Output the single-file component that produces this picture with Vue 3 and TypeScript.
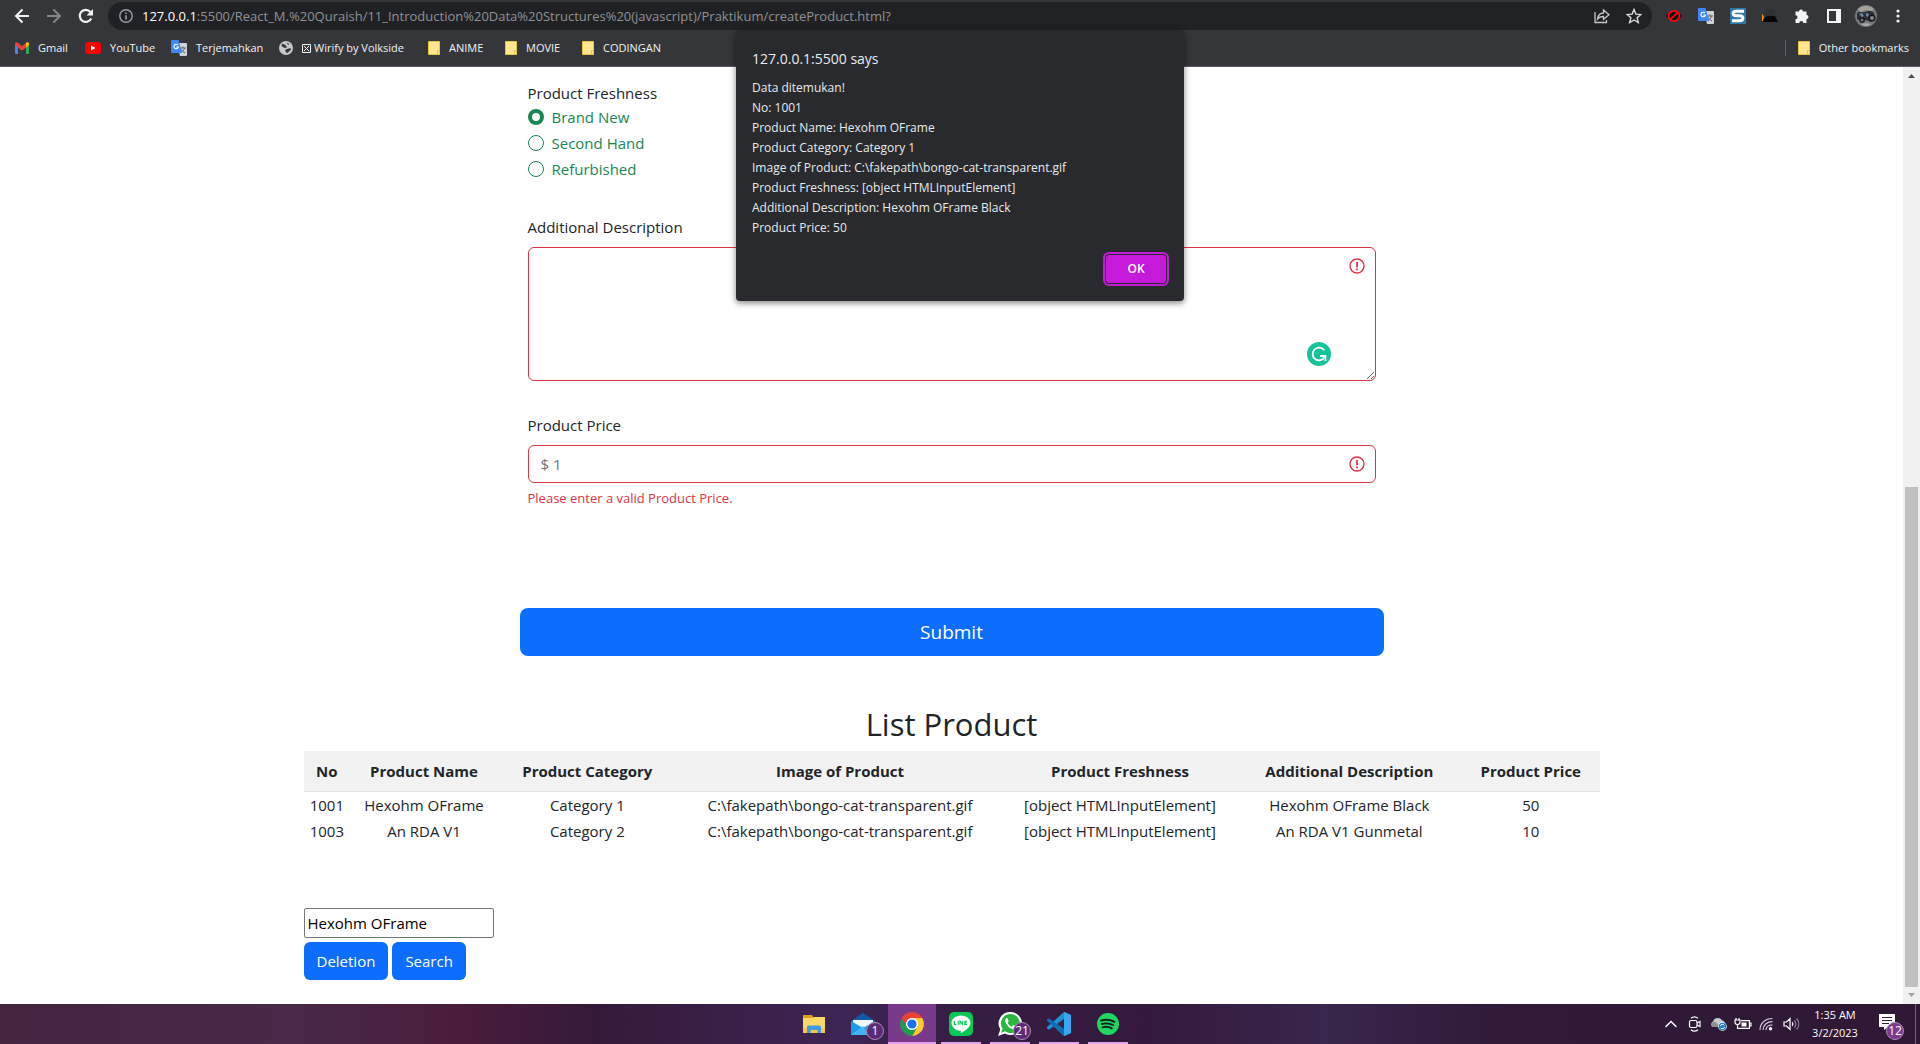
<script setup lang="ts">
import { ref } from 'vue'

interface Product {
  no: number
  name: string
  category: string
  image: string
  freshness: string
  description: string
  price: number
}

const headings: string[] = [
  'No',
  'Product Name',
  'Product Category',
  'Image of Product',
  'Product Freshness',
  'Additional Description',
  'Product Price',
]

const products: Product[] = [
  {
    no: 1001,
    name: 'Hexohm OFrame',
    category: 'Category 1',
    image: 'C:\\fakepath\\bongo-cat-transparent.gif',
    freshness: '[object HTMLInputElement]',
    description: 'Hexohm OFrame Black',
    price: 50,
  },
  {
    no: 1003,
    name: 'An RDA V1',
    category: 'Category 2',
    image: 'C:\\fakepath\\bongo-cat-transparent.gif',
    freshness: '[object HTMLInputElement]',
    description: 'An RDA V1 Gunmetal',
    price: 10,
  },
]

const alertLines: string[] = [
  'Data ditemukan!',
  'No: 1001',
  'Product Name: Hexohm OFrame',
  'Product Category: Category 1',
  'Image of Product: C:\\fakepath\\bongo-cat-transparent.gif',
  'Product Freshness: [object HTMLInputElement]',
  'Additional Description: Hexohm OFrame Black',
  'Product Price: 50',
]

const conditions: string[] = ['Brand New', 'Second Hand', 'Refurbished']
const freshness = ref<string>('Brand New')
const description = ref<string>('')
const price = ref<string>('')
const query = ref<string>('Hexohm OFrame')
</script>

<template>
  <div class="screen">
    <header class="browser">
      <div class="toolbar">
        <button class="tool" type="button" aria-label="Back">
          <svg width="16" height="16" viewBox="0 0 16 16" fill="none" stroke="#f1f3f4" stroke-width="2"><path d="M15 8H2.5M8.5 1.5 2 8l6.500 6.500" /></svg>
        </button>
        <button class="tool" type="button" aria-label="Forward">
          <svg width="16" height="16" viewBox="0 0 16 16" fill="none" stroke="#85868a" stroke-width="2"><path d="M1 8h12.500M7.500 1.500 14 8l-6.500 6.500" /></svg>
        </button>
        <button class="tool" type="button" aria-label="Reload">
          <svg width="16" height="16" viewBox="0 0 16 16" fill="none"><path d="M13.200 10.500A6 6 0 1 1 12.400 4" stroke="#f1f3f4" stroke-width="2.200" /><path d="M15 1v6.500H8.500z" fill="#f1f3f4" /></svg>
        </button>
        <div class="address">
          <svg class="info" width="14" height="14" viewBox="0 0 14 14" fill="none" stroke="#9aa0a6" stroke-width="1.400"><circle cx="7" cy="7" r="6.200" /><path d="M7 6.200v4.300M7 3.400v1.500" stroke-width="1.600" /></svg>
          <span class="url"><span class="host">127.0.0.1</span>:5500/React_M.%20Quraish/11_Introduction%20Data%20Structures%20(javascript)/Praktikum/createProduct.html?</span>
          <button class="tool" type="button" aria-label="Share">
            <svg width="16" height="16" viewBox="0 0 16 16" fill="none" stroke="#c4c7c9" stroke-width="1.300"><path d="M1 4v10.500h11.500V12M3.500 11c.6-4 2.500-6 6-6V2l5.500 4.700-5.500 4.600V8.500c-3 0-4.600.7-6 2.500z" /></svg>
          </button>
          <button class="tool" type="button" aria-label="Bookmark this tab">
            <svg width="16" height="16" viewBox="0 0 16 16" fill="none" stroke="#d5d7d9" stroke-width="1.400"><path d="m8 1.500 1.900 4.600 5 .4-3.800 3.200 1.200 4.900L8 12l-4.300 2.600 1.200-4.900L1.100 6.500l5-.4z" /></svg>
          </button>
        </div>
        <button class="tool" type="button" aria-label="Blocker extension">
          <svg width="16" height="16" viewBox="0 0 16 16"><path d="M0 8c3-5.500 13-5.500 16 0-3 5.500-13 5.500-16 0z" fill="#1c0808" /><ellipse cx="8" cy="8" rx="5.500" ry="5" fill="none" stroke="#f00a0a" stroke-width="1.800" /><path d="m4.500 11 7-6" stroke="#f00a0a" stroke-width="1.800" /></svg>
        </button>
        <button class="tool" type="button" aria-label="Google Translate">
          <svg width="16" height="16" viewBox="0 0 16 16"><path d="M6 3h9a1 1 0 0 1 1 1v11a1 1 0 0 1-1 1H9z" fill="#cfd2d6" /><path d="M9 8h6M12 6.500V8m1.500 0c-.5 2-2 3.500-3.500 4.500M10.500 9.500c.6 1.500 2 2.700 3.500 3.300" stroke="#5f6368" fill="none" /><path d="M1 0h6.500l3.700 13H1a1 1 0 0 1-1-1V1a1 1 0 0 1 1-1z" fill="#4285f4" /><path d="M7 5a2.300 2.300 0 1 0 .5 2H5.200" stroke="#fff" stroke-width="1.100" fill="none" /></svg>
        </button>
        <button class="tool" type="button" aria-label="Stylus extension">
          <svg width="16" height="16" viewBox="0 0 16 16"><path fill="#2f78a8" d="M0 0h16v16H0z" /><path d="M14 3.300H6.500c-4.500 0-4.500 4.500 0 4.500h3c4.500 0 4.500 4.900 0 4.900H2" fill="none" stroke="#fff" stroke-width="3" /></svg>
        </button>
        <button class="tool" type="button" aria-label="Cat extension">
          <svg width="16" height="16" viewBox="0 0 16 16"><path d="M0 6c2 1 2 3 2 7H0z" fill="#f58a16" /><path d="M1 14c0-3 1-4 3-5l1-1h8l3 6z" fill="#050505" /><path d="M3 1h10v7H3z" fill="#303135" /></svg>
        </button>
        <button class="tool" type="button" aria-label="Extensions">
          <svg width="16" height="16" viewBox="0 0 16 16" fill="#f1f3f4"><path d="M1.500 3.500H5a2 2 0 0 1 4 0h3.500V7a2 2 0 0 1 0 4v4H9.300a2 2 0 0 0-4 0H1.500v-3.800a2 2 0 0 0 0-4z" /></svg>
        </button>
        <button class="tool" type="button" aria-label="Side panel">
          <svg width="14" height="14" viewBox="0 0 14 14"><path fill="#f1f3f4" d="M0 0h14v14H0z" /><path fill="#35363a" d="M2 2h7v10H2z" /></svg>
        </button>
        <button class="tool" type="button" aria-label="Profile">
          <svg width="22" height="22" viewBox="0 0 22 22"><circle cx="11" cy="11" r="11" fill="#77797b" /><path d="M3 4c4-4 12-4 16 0l-3 2-5-1-5 2z" fill="#a5a09a" /><path d="M2 8c3-2 5 0 8-1s6-2 9 1l1 6-4 3-5-2-4 2-5-3z" fill="#2b3038" /><path d="m4 9 3-1 2 3-2 1zM11 8l3 1-1 3-2-1z" fill="#6f86a3" /><circle cx="17" cy="13" r="2.800" fill="#858787" stroke="#15171a" stroke-width="1.500" /><circle cx="7" cy="15" r="2.200" fill="#6c6e70" stroke="#15171a" stroke-width="1.300" /><path d="M6 19c3-1 7-1 10 0-3 2.500-7 2.500-10 0z" fill="#a9aaaa" /></svg>
        </button>
        <button class="tool" type="button" aria-label="Menu">
          <svg width="4" height="14" viewBox="0 0 4 14" fill="#f1f3f4"><circle cx="2" cy="2" r="1.600" /><circle cx="2" cy="7" r="1.600" /><circle cx="2" cy="12" r="1.600" /></svg>
        </button>
      </div>

      <nav class="bookmarks" aria-label="Bookmarks">
        <a class="bookmark" href="#gmail">
          <svg width="14" height="12" viewBox="0 0 14 12"><path fill="#4285f4" d="M0 2v9a1 1 0 0 0 1 1h2V5z" /><path fill="#34a853" d="M14 2v9a1 1 0 0 1-1 1h-2V5z" /><path fill="#ea4335" d="M0 2C0 0 2-.2 3 .8l4 3.400 4-3.400C12-.2 14 0 14 2v1L7 8.700 0 3z" /><path fill="#fbbc04" d="M11 .8C12-.2 14 0 14 2v1l-3 2.500z" /></svg>
          Gmail
        </a>
        <a class="bookmark" href="#youtube">
          <svg width="16" height="12" viewBox="0 0 16 12"><rect width="16" height="12" rx="3" fill="#f00" /><path d="m6 3.500 4.500 2.500L6 8.500z" fill="#fff" /></svg>
          YouTube
        </a>
        <a class="bookmark" href="#translate">
          <svg width="16" height="16" viewBox="0 0 16 16"><path d="M6 3h9a1 1 0 0 1 1 1v11a1 1 0 0 1-1 1H9z" fill="#cfd2d6" /><path d="M9 8h6M12 6.500V8m1.500 0c-.5 2-2 3.500-3.500 4.500M10.500 9.500c.6 1.500 2 2.700 3.500 3.300" stroke="#5f6368" fill="none" /><path d="M1 0h6.500l3.700 13H1a1 1 0 0 1-1-1V1a1 1 0 0 1 1-1z" fill="#4285f4" /><path d="M7 5a2.300 2.300 0 1 0 .5 2H5.200" stroke="#fff" stroke-width="1.100" fill="none" /></svg>
          Terjemahkan
        </a>
        <a class="bookmark" href="#wirify">
          <svg width="14" height="14" viewBox="0 0 14 14"><circle cx="7" cy="7" r="7" fill="#c6c9cc" /><path d="M3 2.500 6.500 4 8 6.500 5.500 7l-3-2zM7.500 1.500l3 1.500-1.500 1zM6.500 8.500l5-1.500.5 1.500-3.500 3.500-2-1z" fill="#35363a" /></svg>
          <span class="wirify">
            <svg width="9" height="9" viewBox="0 0 9 9" fill="none" stroke="#f1f3f4"><path d="M.5.500h8v8h-8zM2 2l5 5M7 2 2 7" /></svg>
            Wirify by Volkside
          </span>
        </a>
        <a v-for="folder in ['ANIME', 'MOVIE', 'CODINGAN']" :key="folder" class="bookmark" :href="'#' + folder.toLowerCase()">
          <svg width="12" height="14" viewBox="0 0 12 14"><path d="M.5.500h11v13H.5z" fill="#ffe58f" stroke="#e8c445" /><path d="M9.500 9.500h2v4h-2z" fill="#ffe58f" stroke="#e8c445" /></svg>
          {{ folder }}
        </a>
        <a class="bookmark other" href="#other">
          <svg width="12" height="14" viewBox="0 0 12 14"><path d="M.5.500h11v13H.5z" fill="#ffe58f" stroke="#e8c445" /><path d="M9.500 9.500h2v4h-2z" fill="#ffe58f" stroke="#e8c445" /></svg>
          Other bookmarks
        </a>
      </nav>
    </header>

    <div class="viewport">
      <main class="page">
        <div class="container">
          <form class="product-form" @submit.prevent>
            <fieldset class="field">
              <legend class="label">Product Freshness</legend>
              <label v-for="condition in conditions" :key="condition" class="choice">
                <input v-model="freshness" type="radio" name="freshness" :value="condition" />
                {{ condition }}
              </label>
            </fieldset>

            <div class="field">
              <label class="label spaced" for="description">Additional Description</label>
              <div class="control">
                <textarea id="description" v-model="description" class="input area"></textarea>
                <svg class="invalid" width="16" height="16" viewBox="0 0 16 16" fill="none" stroke="#dc3545" stroke-width="1.400"><circle cx="8" cy="8" r="7" /><path d="M8 4v5.200M8 10.500v1.800" stroke-width="1.800" /></svg>
                <svg class="grammar" width="24" height="24" viewBox="0 0 24 24"><circle cx="12" cy="12" r="12" fill="#15c39a" /><path d="M17.300 8.300A6.400 6.400 0 1 0 17.700 15" fill="none" stroke="#fff" stroke-width="1.800" /><path d="M13 14h5.400v5" fill="none" stroke="#fff" stroke-width="1.800" /></svg>
              </div>
            </div>

            <div class="field">
              <label class="label spaced" for="price">Product Price</label>
              <div class="control">
                <input id="price" v-model="price" class="input" type="text" placeholder="$ 1" />
                <svg class="invalid" width="16" height="16" viewBox="0 0 16 16" fill="none" stroke="#dc3545" stroke-width="1.400"><circle cx="8" cy="8" r="7" /><path d="M8 4v5.200M8 10.500v1.800" stroke-width="1.800" /></svg>
              </div>
              <p class="feedback">Please enter a valid Product Price.</p>
            </div>

            <button class="button submit" type="submit">Submit</button>
          </form>

          <h2 class="title">List Product</h2>
          <table class="products">
            <colgroup>
              <col class="col-no" />
              <col class="col-name" />
              <col class="col-category" />
              <col class="col-image" />
              <col class="col-freshness" />
              <col class="col-description" />
              <col class="col-price" />
            </colgroup>
            <thead>
              <tr>
                <th v-for="heading in headings" :key="heading" scope="col">{{ heading }}</th>
              </tr>
            </thead>
            <tbody>
              <tr v-for="product in products" :key="product.no">
                <td>{{ product.no }}</td>
                <td>{{ product.name }}</td>
                <td>{{ product.category }}</td>
                <td>{{ product.image }}</td>
                <td>{{ product.freshness }}</td>
                <td>{{ product.description }}</td>
                <td>{{ product.price }}</td>
              </tr>
            </tbody>
          </table>

          <div class="lookup">
            <input v-model="query" class="query" type="text" aria-label="Product name" />
            <div class="actions">
              <button class="button" type="button">Deletion</button>
              <button class="button" type="button">Search</button>
            </div>
          </div>
        </div>
      </main>

      <div class="scrollbar" aria-hidden="true">
        <svg width="17" height="17" viewBox="0 0 17 17"><path d="m5 11 3.500-4 3.500 4z" fill="#505050" /></svg>
        <div class="track"><div class="thumb"></div></div>
        <svg width="17" height="17" viewBox="0 0 17 17"><path d="m5 6 3.500 4L12 6z" fill="#a3a3a3" /></svg>
      </div>
    </div>

    <footer class="taskbar">
      <div class="apps">
        <button class="app" type="button" aria-label="File Explorer">
          <svg width="24" height="24" viewBox="0 0 24 24"><path d="M1 3h8l2 2h12v16H1z" fill="#fbd768" /><path d="M1 3h9l1.500 3H1z" fill="#e0a01c" /><path d="M1 16h22v5H1z" fill="#f6c64e" /><path d="M5 21v-6a1.500 1.500 0 0 1 1.500-1.500h11A1.500 1.500 0 0 1 19 15v6h-3.500v-3h-7v3z" fill="#3f9be0" /></svg>
        </button>
        <button class="app" type="button" aria-label="Mail, 1 unread">
          <svg width="24" height="24" viewBox="0 0 24 24"><path d="M0 9 12 1l12 8v3H0z" fill="#0f5ba8" /><path d="M2 8h20v9H2z" fill="#f3f6fa" /><path d="m0 9 12 7 12-7v14H0z" fill="#1b9cea" /><path d="m0 23 12-9 5 9z" fill="#42b6f5" /></svg>
          <span class="badge">1</span>
        </button>
        <button class="app active" type="button" aria-label="Google Chrome">
          <svg width="26" height="26" viewBox="0 0 48 48"><circle cx="24" cy="24" r="12" fill="#fff" /><path d="M43.050 13H24a11 11 0 0 0-9.530 16.500L4.950 13a22 22 0 0 1 38.100 0z" fill="#ea4335" /><path d="M43.050 13A22 22 0 0 1 24 46l9.530-16.500A11 11 0 0 0 24 13z" fill="#fcc934" /><path d="M24 46A22 22 0 0 1 4.950 13l9.520 16.500a11 11 0 0 0 19.060 0z" fill="#1e9e4a" /><circle cx="24" cy="24" r="8.500" fill="#1a73e8" /></svg>
        </button>
        <button class="app open" type="button" aria-label="LINE">
          <svg width="24" height="24" viewBox="0 0 24 24"><rect width="24" height="24" rx="5" fill="#06c755" /><path d="M12 3.500c5.200 0 9.500 3.300 9.500 7.400 0 4-5 7.300-9 9.900-.8.500-.8-.3-.7-2-5-.2-9.300-3.600-9.300-7.900 0-4.100 4.300-7.400 9.500-7.400z" fill="#fff" /><path d="M5.500 9v3.500h2M9.200 9v3.700M11 12.700V9l2.700 3.500V9M18 9.300h-2.200v3.200H18M16 10.900h1.800" stroke="#06c755" stroke-width="1.100" fill="none" /></svg>
        </button>
        <button class="app open" type="button" aria-label="WhatsApp, 21 unread">
          <svg width="24" height="24" viewBox="0 0 24 24"><path d="M12.500 0A11.500 11.500 0 1 1 6.800 21.500L0 24l2.300-6.500A11.500 11.500 0 0 1 12.500 0z" fill="#fff" /><path d="M12.500 2A9.500 9.500 0 1 1 7 19.300L3 21l1.500-4.300A9.500 9.500 0 0 1 12.500 2z" fill="#2cb742" /><path d="M8.500 6c-1.500 1-1.800 3-.4 5.500 1.600 3 4 5 6.700 5.800 1.700.5 3.500-.7 3.500-2.500l-3-1.700-1.500 1.600c-2-.8-3.300-2-4.200-4l1.100-1.500L9.600 6z" fill="#fff" /></svg>
          <span class="badge">21</span>
        </button>
        <button class="app open" type="button" aria-label="Visual Studio Code">
          <svg width="24" height="24" viewBox="0 0 24 24"><path d="m17 0 7 3v18l-7 3L6.500 14.200 2 17.700 0 16.500V15L12 4.500z" fill="#1f8fd6" /><path d="M0 9V7.500l2-1.200L17.500 18v6L7 14.500z" fill="#0c6fb4" /><path d="M17.500 6.500v11L10 12z" fill="#382146" /><path d="m17 0 7 3v18l-7 3z" fill="#3aa8f0" /></svg>
        </button>
        <button class="app open" type="button" aria-label="Spotify">
          <svg width="22" height="22" viewBox="0 0 22 22"><circle cx="11" cy="11" r="11" fill="#1ed760" /><path d="M4 7.500c4.500-1.300 9.500-.9 13.500 1.300M4.800 11c4-1.100 8-.700 11.400 1.200M5.500 14.300c3.300-.9 6.500-.5 9.300 1.100" fill="none" stroke="#17251c" stroke-width="1.900" stroke-linecap="round" /></svg>
        </button>
      </div>

      <div class="tray">
        <button class="tray-icon" type="button" aria-label="Show hidden icons">
          <svg width="14" height="10" viewBox="0 0 14 10" fill="none" stroke="#fff" stroke-width="1.400"><path d="m1.500 8 5.500-5.500L12.500 8" /></svg>
        </button>
        <button class="tray-icon" type="button" aria-label="Meet now">
          <svg width="14" height="16" viewBox="0 0 14 16" fill="none" stroke="#fff" stroke-width="1.200"><rect x="1.500" y="4.500" width="7.500" height="7" rx="1.500" /><path d="m9 7 3-1.500v5L9 9M3 2.200C5 .6 8 .6 10 2.200M3 13.800c2 1.600 5 1.600 7 0" /></svg>
        </button>
        <button class="tray-icon" type="button" aria-label="OneDrive">
          <svg width="18" height="14" viewBox="0 0 18 14"><path d="M3 10a3 3 0 0 1 0-5.500A5 5 0 0 1 12 3.200 4 4 0 0 1 14 10z" fill="#c9cbcf" /><path d="M3 10a3 3 0 0 1 2-5.500l6 5.500z" fill="#8e9096" /><circle cx="12.500" cy="9.500" r="4.300" fill="#fff" /><circle cx="12.500" cy="9.500" r="3.700" fill="#1a78d0" /><path d="M10.500 9a2 2 0 0 1 3.700-.7M14.500 10a2 2 0 0 1-3.700.7" stroke="#fff" fill="none" /></svg>
        </button>
        <button class="tray-icon" type="button" aria-label="Battery charging">
          <svg width="18" height="14" viewBox="0 0 18 14" fill="none" stroke="#fff" stroke-width="1.200"><path d="M7 3.600h8.400v7.800H5.500M15.500 6h1.500v3h-1.500M2 1v2M5 1v2M3.500 8v3.400h2" /><path d="M1 3h5v2a2.500 2.500 0 0 1-5 0z" /><path d="M7.500 5.500h5v4h-5z" fill="#fff" stroke="none" /></svg>
        </button>
        <button class="tray-icon" type="button" aria-label="Network">
          <svg width="16" height="16" viewBox="0 0 16 16" fill="none" stroke="#d8cfdc" stroke-width="1.200"><path d="M1 14C1 7 6.500 2.500 13.500 2.500M4 14c0-5 4-8.300 9.500-8.300M7 14c0-3 2.600-5 6.500-5" /><circle cx="11.500" cy="12.700" r="1.700" fill="#fff" stroke="none" /></svg>
        </button>
        <button class="tray-icon" type="button" aria-label="Volume">
          <svg width="17" height="14" viewBox="0 0 17 14" fill="none" stroke="#fff" stroke-width="1.200"><path d="M1 5h2.500L7 1.700v10.600L3.500 9H1zM9.200 5c.8 1.200.8 2.800 0 4" /><path d="M11.300 3.300c1.800 2.200 1.800 5.200 0 7.400M13.600 1.500c2.800 3.300 2.800 7.700 0 11" stroke="#94849a" /></svg>
        </button>
        <div class="clock"><span>1:35 AM</span><span>3/2/2023</span></div>
        <button class="notices" type="button" aria-label="12 notifications">
          <svg width="16" height="16" viewBox="0 0 16 16"><path d="M0 0h16v13H9l-4 3v-3H0z" fill="#fff" /><path d="M3 3.500h10M3 6.500h10M3 9.500h7" stroke="#301a36" /></svg>
          <span class="badge large">12</span>
        </button>
        <span class="desktop-edge"></span>
      </div>
    </footer>

    <div class="alert" role="alertdialog" aria-labelledby="alert-title">
      <div id="alert-title" class="alert-title">127.0.0.1:5500 says</div>
      <div class="alert-body">
        <div v-for="line in alertLines" :key="line">{{ line }}</div>
      </div>
      <button class="alert-ok" type="button">OK</button>
    </div>
  </div>
</template>

<style>
body {
  margin: 0;
}
</style>

<style scoped>
* {
  box-sizing: border-box;
}

.screen {
  position: relative;
  display: flex;
  flex-direction: column;
  min-height: 100vh;
  background: #fff;
  color: #212529;
  font-family: 'Open Sans', 'Noto Sans', sans-serif;
  font-size: 15px;
  line-height: 24px;
}

button,
input,
textarea {
  margin: 0;
  font: inherit;
}

svg {
  flex: none;
}

/* Browser chrome */
.browser {
  padding-bottom: 2px;
  border-bottom: 1px solid #5d5b60;
  background: #35363a;
  color: #f1f3f4;
}

.toolbar {
  display: flex;
  align-items: center;
  height: 32px;
  padding: 0 6px;
}

.tool {
  display: flex;
  flex: none;
  align-items: center;
  justify-content: center;
  width: 32px;
  height: 28px;
  padding: 0;
  border: 0;
  background: none;
}

.address {
  display: flex;
  flex: 1;
  align-items: center;
  min-width: 0;
  height: 28px;
  margin: 0 6px;
  padding: 0 2px 0 11px;
  border-radius: 14px;
  background: #202124;
}

.url {
  flex: 1;
  min-width: 0;
  margin-left: 9px;
  overflow: hidden;
  color: #8f9296;
  font-size: 13px;
  white-space: nowrap;
}

.host {
  color: #fff;
}

.bookmarks {
  display: grid;
  grid-template-columns: 70px 86px 108px 149px 77px 77px 1fr auto;
  align-items: center;
  height: 32px;
  padding: 0 11px 0 15px;
  font-size: 11px;
}

.bookmark {
  display: flex;
  align-items: center;
  gap: 9px;
  color: #f1f3f4;
  white-space: nowrap;
  text-decoration: none;
}

.wirify {
  display: flex;
  align-items: center;
  gap: 3px;
}

.other {
  height: 16px;
  padding-left: 12px;
  border-left: 1px solid #5f6165;
}

/* Page */
.viewport {
  display: flex;
  flex: 1;
}

.page {
  flex: 1;
  padding: 14px 12px 24px;
}

.container {
  width: 100%;
  max-width: 1296px;
  margin: 0 auto;
}

.product-form {
  width: 66.667%;
  margin: 0 auto;
}

.field {
  margin: 0 0 32px;
  padding: 0 8px;
  border: 0;
}

.label {
  display: block;
  padding: 0;
}

.spaced {
  margin-bottom: 8px;
}

.choice {
  display: flex;
  align-items: center;
  gap: 8px;
  margin-bottom: 2px;
  color: #198754;
}

.choice input {
  width: 16px;
  height: 16px;
  border: 1px solid #198754;
  border-radius: 50%;
  background: #fff;
  appearance: none;
}

.choice input:checked {
  border-width: 4px;
}

.control {
  position: relative;
}

.input {
  display: block;
  width: 100%;
  height: 38px;
  padding: 6px 12px;
  border: 1px solid #dc3545;
  border-radius: 6px;
  background: #fff;
  color: #212529;
}

.input::placeholder {
  color: #6c757d;
}

.area {
  height: 134px;
  resize: vertical;
}

.invalid {
  position: absolute;
  top: 11px;
  right: 11px;
}

.grammar {
  position: absolute;
  right: 45px;
  bottom: 15px;
}

.feedback {
  margin: 4px 0 0;
  color: #dc3545;
  font-size: 13px;
  line-height: 22px;
}

.button {
  height: 38px;
  padding: 0 13px;
  border: 0;
  border-radius: 6px;
  background: #0d6efd;
  color: #fff;
}

.submit {
  display: block;
  width: 100%;
  height: 48px;
  margin-top: 99px;
  border-radius: 8px;
  font-size: 19px;
}

.title {
  margin: 49px 0 8px;
  font-size: 31px;
  font-weight: 500;
  line-height: 38px;
  text-align: center;
}

.products {
  width: 100%;
  border-collapse: collapse;
  table-layout: fixed;
  text-align: center;
}

.products th {
  padding: 8px 0;
  border-bottom: 1px solid #dee2e6;
  background: #f2f2f2;
  font-weight: 700;
}

.products td {
  padding: 1px 0;
}

.col-no {
  width: 3.6%;
}

.col-name {
  width: 11.4%;
}

.col-category {
  width: 13.8%;
}

.col-image {
  width: 25.2%;
}

.col-freshness {
  width: 18%;
}

.col-description {
  width: 17.4%;
}

.col-price {
  width: 10.6%;
}

.lookup {
  margin-top: 64px;
}

.query {
  display: block;
  width: 190px;
  height: 30px;
  padding: 1px 3px;
  border: 1px solid #767676;
  border-radius: 2px;
  background: #fff;
  color: #000;
}

.actions {
  display: flex;
  gap: 4px;
  margin-top: 4px;
}

.scrollbar {
  display: flex;
  flex-direction: column;
  width: 17px;
  background: #f1f1f1;
}

.track {
  display: flex;
  flex: 1;
  flex-direction: column;
  justify-content: flex-end;
  padding: 0 2px;
}

.thumb {
  height: 55.4%;
  background: #c1c1c1;
}

/* Taskbar */
.taskbar {
  display: grid;
  grid-template-columns: 1fr auto 1fr;
  height: 40px;
  background: linear-gradient(
    90deg,
    #43243f,
    #482a48 15%,
    #491d3b 24%,
    #341a38 31%,
    #3d2554 44%,
    #361d42 50%,
    #331a3c 60%,
    #39264c 69%,
    #301a38 78%,
    #2f1834
  );
  color: #fff;
}

.apps {
  display: flex;
  grid-column: 2;
  gap: 1px;
  padding-left: 2px;
}

.app {
  position: relative;
  display: flex;
  align-items: center;
  justify-content: center;
  width: 48px;
  height: 40px;
  padding: 0;
  border: 0;
  background: none;
}

.active {
  background: #7a3a8c;
}

.active::after,
.open::after {
  position: absolute;
  right: 4px;
  bottom: 0;
  left: 4px;
  height: 2px;
  background: #e3a0ec;
  content: '';
}

.active::after {
  right: 0;
  left: 0;
}

.badge {
  position: absolute;
  right: 3px;
  bottom: 4px;
  width: 18px;
  height: 18px;
  border: 1px solid #a98bb8;
  border-radius: 50%;
  background: #5b2c74;
  color: #fff;
  font-size: 12px;
  line-height: 16px;
  text-align: center;
}

.tray {
  display: flex;
  align-items: center;
  justify-content: flex-end;
}

.tray-icon {
  display: flex;
  align-items: center;
  justify-content: center;
  width: 24px;
  height: 40px;
  padding: 0;
  border: 0;
  background: none;
}

.clock {
  display: flex;
  flex-direction: column;
  width: 64px;
  font-size: 11px;
  line-height: 18px;
  text-align: center;
}

.notices {
  position: relative;
  width: 48px;
  height: 40px;
  padding: 0 12px;
  border: 0;
  background: none;
  text-align: left;
}

.large {
  right: 11px;
  background: #7b3a8e;
}

.desktop-edge {
  width: 5px;
  height: 40px;
  border-left: 1px solid #75637c;
}

/* Script alert */
.alert {
  position: absolute;
  top: 30px;
  left: 50%;
  display: flex;
  flex-direction: column;
  width: 448px;
  padding: 17px 17px 17px 16px;
  border-radius: 4px;
  background: #292a2d;
  box-shadow: 0 2px 6px rgba(0, 0, 0, 0.5);
  color: #e8eaed;
  transform: translateX(-50%);
}

.alert-title {
  font-size: 14px;
  line-height: 24px;
}

.alert-body {
  margin-top: 7px;
  font-size: 12px;
  line-height: 20px;
}

.alert-ok {
  align-self: flex-end;
  width: 62px;
  height: 30px;
  margin: 16px 0 0;
  border: 1px solid #292a2d;
  border-radius: 4px;
  outline: 2px solid #c51ad9;
  background: #c51ad9;
  color: #fff;
  font-size: 12px;
  font-weight: 600;
}
</style>
